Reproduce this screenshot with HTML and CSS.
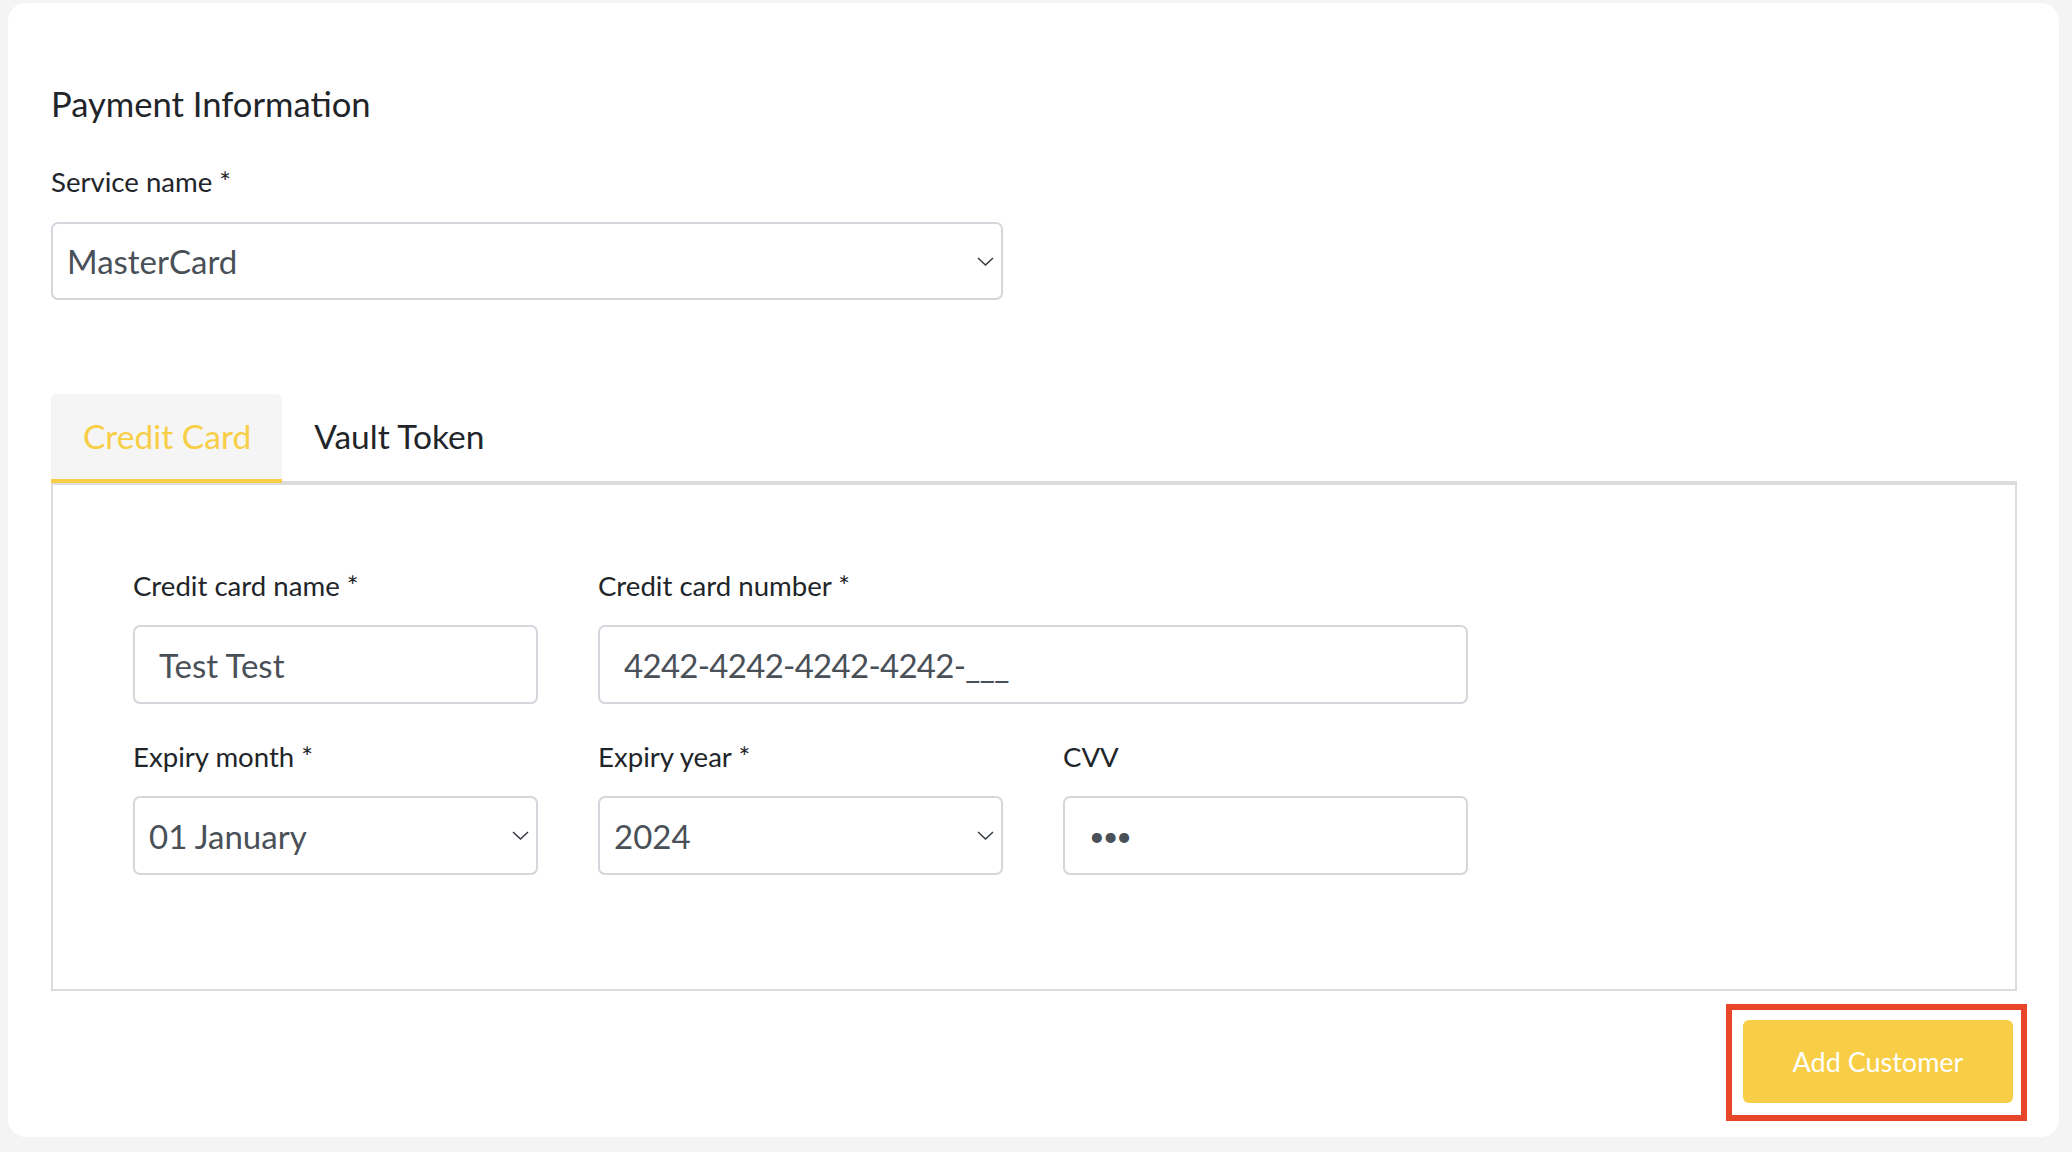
FILE: index.html
```html
<!DOCTYPE html>
<html lang="en">
<head>
<meta charset="utf-8">
<title>Payment Information</title>
<link rel="stylesheet" href="styles.css">
</head>
<body>
<div class="card">
  <h2 class="title">Payment Information</h2>
  <label class="label" for="service">Service name *</label>
  <div class="select-wrap service">
    <select id="service" class="control select"><option>MasterCard</option></select>
    <svg class="chev" width="17" height="9" viewBox="0 0 17 9"><path d="M1 1l7.5 7 7.5-7" fill="none" stroke="#343a40" stroke-width="1.5"/></svg>
  </div>

  <div class="tabs">
    <div class="tab active">Credit Card</div>
    <div class="tab">Vault Token</div>
  </div>
  <div class="panel">
    <div class="grid">
      <div class="field">
        <label class="label">Credit card name *</label>
        <input class="control input" type="text" value="Test Test">
      </div>
      <div class="field span2">
        <label class="label">Credit card number *</label>
        <input class="control input digits" type="text" value="4242-4242-4242-4242-___">
      </div>
      <div class="field">
        <label class="label">Expiry month *</label>
        <div class="select-wrap">
          <select class="control select"><option>01 January</option></select>
          <svg class="chev" width="17" height="9" viewBox="0 0 17 9"><path d="M1 1l7.5 7 7.5-7" fill="none" stroke="#343a40" stroke-width="1.5"/></svg>
        </div>
      </div>
      <div class="field">
        <label class="label">Expiry year *</label>
        <div class="select-wrap">
          <select class="control select"><option>2024</option></select>
          <svg class="chev" width="17" height="9" viewBox="0 0 17 9"><path d="M1 1l7.5 7 7.5-7" fill="none" stroke="#343a40" stroke-width="1.5"/></svg>
        </div>
      </div>
      <div class="field">
        <label class="label">CVV</label>
        <input class="control input pwd" type="password" value="123">
      </div>
    </div>
  </div>
  <div class="actions">
    <div class="highlight">
      <button class="btn">Add Customer</button>
    </div>
  </div>
</div>
</body>
</html>
```
FILE: styles.css
```css
* { box-sizing: border-box; }
html, body { margin: 0; }
body {
  background: #f4f4f4;
  padding: 3px 13px 15px 8px;
  font-family: Lato, "Liberation Sans", sans-serif;
  color: #212529;
}
.card {
  background: #fff;
  border-radius: 18px;
  height: 1134px;
  padding: 81px 42px 0 43px;
}
.title {
  margin: 0;
  font-size: 34.6px;
  line-height: 40px;
  font-weight: 400;
}
.label {
  display: block;
  font-size: 27.6px;
  line-height: 32px;
  color: #212529;
}
.card > .label { margin-top: 42px; }
.select-wrap { position: relative; }
.select-wrap.service { width: 952px; margin-top: 24px; }
.control {
  display: block;
  width: 100%;
  height: 79px;
  border: 2px solid #d3d7db;
  border-radius: 7px;
  background: #fff;
  color: #495057;
  font-family: Lato, "Liberation Sans", sans-serif;
  font-size: 33px;
  outline: none;
  margin: 0;
}
.service .control { height: 78px; }
.select {
  appearance: none;
  -webkit-appearance: none;
  padding: 0 40px 0 14px;
}
.input { padding: 0 24px; }
.digits { letter-spacing: -0.7px; }
.pwd { font-size: 27px; letter-spacing: -2px; padding-left: 24px; }
.chev {
  position: absolute;
  right: 9px;
  top: 35px;
  pointer-events: none;
}
.tabs {
  display: flex;
  margin-top: 94px;
  height: 89px;
  border-bottom: 2px solid #dcdcdc;
}
.tab {
  padding: 22px 31px 0 32px;
  height: 89px;
  font-size: 33.5px;
  line-height: 40px;
  color: #212529;
  border-bottom: 4px solid transparent;
  border-radius: 6px 6px 0 0;
}
.tab.active {
  background: #f5f5f5;
  color: #f7ce46;
  border-bottom-color: #f7ce46;
}
.panel {
  border: 2px solid #dcdcdc;
  height: 508px;
  padding: 85px 0 0 80px;
}
.grid {
  display: grid;
  grid-template-columns: repeat(3, 405px);
  column-gap: 60px;
  row-gap: 37px;
}
.span2 { grid-column: span 2; }
.field .label { margin-bottom: 23px; }
.actions {
  display: flex;
  justify-content: flex-end;
  padding-top: 13px;
  margin-right: -10px;
}
.highlight {
  border: 6px solid #e8462b;
  padding: 10px 8px 12px 11px;
}
.btn {
  display: block;
  width: 270px;
  height: 83px;
  border: 0;
  border-radius: 6px;
  background: #f7ce46;
  color: #fff;
  font-family: Lato, "Liberation Sans", sans-serif;
  font-size: 27px;
}
```
